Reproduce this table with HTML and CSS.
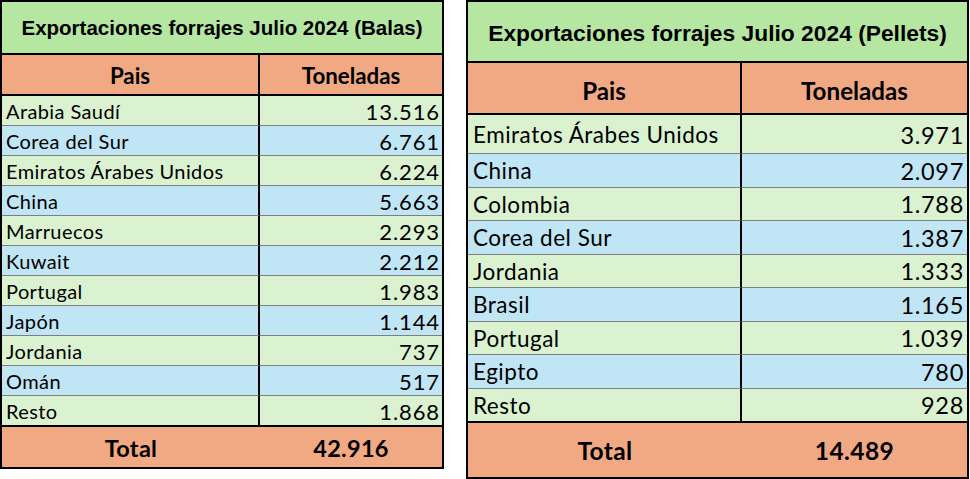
FILE: index.html
```html
<!DOCTYPE html>
<html lang="es">
<head>
<meta charset="utf-8">
<title>Exportaciones forrajes Julio 2024</title>
<link rel="stylesheet" href="styles.css">
</head>
<body>
<div class="page">
  <table class="t balas">
    <colgroup><col class="c1"><col class="c2"></colgroup>
    <tr class="title"><td colspan="2">Exportaciones forrajes Julio 2024 (Balas)</td></tr>
    <tr class="head"><td class="k">Pais</td><td>Toneladas</td></tr>
    <tr class="g"><td class="k">Arabia Saudí</td><td class="v">13.516</td></tr>
    <tr class="b"><td class="k">Corea del Sur</td><td class="v">6.761</td></tr>
    <tr class="g"><td class="k">Emiratos Árabes Unidos</td><td class="v">6.224</td></tr>
    <tr class="b"><td class="k">China</td><td class="v">5.663</td></tr>
    <tr class="g"><td class="k">Marruecos</td><td class="v">2.293</td></tr>
    <tr class="b"><td class="k">Kuwait</td><td class="v">2.212</td></tr>
    <tr class="g"><td class="k">Portugal</td><td class="v">1.983</td></tr>
    <tr class="b"><td class="k">Japón</td><td class="v">1.144</td></tr>
    <tr class="g"><td class="k">Jordania</td><td class="v">737</td></tr>
    <tr class="b"><td class="k">Omán</td><td class="v">517</td></tr>
    <tr class="g last"><td class="k">Resto</td><td class="v">1.868</td></tr>
    <tr class="total"><td>Total</td><td>42.916</td></tr>
  </table>
  <table class="t pellets">
    <colgroup><col class="c1"><col class="c2"></colgroup>
    <tr class="title"><td colspan="2">Exportaciones forrajes Julio 2024 (Pellets)</td></tr>
    <tr class="head"><td class="k">Pais</td><td>Toneladas</td></tr>
    <tr class="g first"><td class="k">Emiratos Árabes Unidos</td><td class="v">3.971</td></tr>
    <tr class="b"><td class="k">China</td><td class="v">2.097</td></tr>
    <tr class="g"><td class="k">Colombia</td><td class="v">1.788</td></tr>
    <tr class="b"><td class="k">Corea del Sur</td><td class="v">1.387</td></tr>
    <tr class="g"><td class="k">Jordania</td><td class="v">1.333</td></tr>
    <tr class="b"><td class="k">Brasil</td><td class="v">1.165</td></tr>
    <tr class="g"><td class="k">Portugal</td><td class="v">1.039</td></tr>
    <tr class="b"><td class="k">Egipto</td><td class="v">780</td></tr>
    <tr class="g last"><td class="k">Resto</td><td class="v">928</td></tr>
    <tr class="total"><td>Total</td><td>14.489</td></tr>
  </table>
</div>
</body>
</html>
```
FILE: styles.css
```css
html, body {
  margin: 0;
  padding: 0;
  background: #ffffff;
}
.page {
  display: flex;
  align-items: flex-start;
  gap: 22px;
}
.t {
  border-collapse: separate;
  border-spacing: 0;
  border: 2px solid #000;
  table-layout: fixed;
  font-family: "Lato", "Noto Sans", sans-serif;
  color: #000;
}
.t td {
  padding: 0;
  box-sizing: border-box;
  white-space: nowrap;
  overflow: hidden;
}
.title td {
  background: #b5e6a2;
  font-family: "Liberation Sans", Arial, sans-serif;
  font-weight: bold;
  text-align: center;
  border-bottom: 2px solid #000;
}
.head td {
  background: #f1a983;
  font-weight: bold;
  text-align: center;
  border-bottom: 2px solid #000;
}
.t td.k {
  border-right: 2px solid #000;
  text-align: left;
}
.head td.k { text-align: center; }
.g td { background: #daf2d0; }
.b td { background: #c0e6f5; }
.g td, .b td { border-bottom: 1px solid #7f7f7f; }
.last td { border-bottom: 2px solid #000; }
.t td.v { text-align: right; }
.total td {
  background: #f1a983;
  font-weight: bold;
  text-align: center;
}

/* Balas */
.balas { width: 444px; }
.balas .c1 { width: 258px; }
.balas .c2 { width: 182px; }
.balas .title td { height: 53px; font-size: 20.5px; padding-top: 1px; }
.balas .head td { height: 41px; font-size: 22.3px; padding-top: 1px; }
.balas .g td, .balas .b td { height: 30px; font-size: 20px; letter-spacing: 0.4px; padding-top: 1px; }
.balas .g td.v, .balas .b td.v { font-size: 22px; letter-spacing: 0.9px; }
.balas .last td { height: 31px; }
.balas .total td { height: 40px; font-size: 23.5px; letter-spacing: 0.3px; padding-top: 2px; }
.balas td.k { padding-left: 4px; }
.balas td.v { padding-right: 2px; }
.balas .head td.k, .balas .total td { padding-left: 0; }

/* Pellets */
.pellets { width: 503px; }
.pellets .c1 { width: 274px; }
.pellets .c2 { width: 225px; }
.pellets .title td { height: 61px; font-size: 22.8px; padding-top: 3px; }
.pellets .head td { height: 52px; font-size: 24.2px; padding-top: 4px; }
.pellets .g td, .pellets .b td { height: 33.5px; font-size: 22.5px; letter-spacing: 0.5px; padding-top: 1px; }
.pellets .g td.v, .pellets .b td.v { font-size: 23.5px; letter-spacing: 0.7px; }
.pellets .first td { height: 39px; }
.pellets .last td { height: 34px; }
.pellets .total td { height: 54px; font-size: 24.5px; letter-spacing: 0.4px; padding-top: 2px; }
.pellets td.k { padding-left: 5px; }
.pellets td.v { padding-right: 3px; }
.pellets .head td.k, .pellets .total td { padding-left: 0; }
```
